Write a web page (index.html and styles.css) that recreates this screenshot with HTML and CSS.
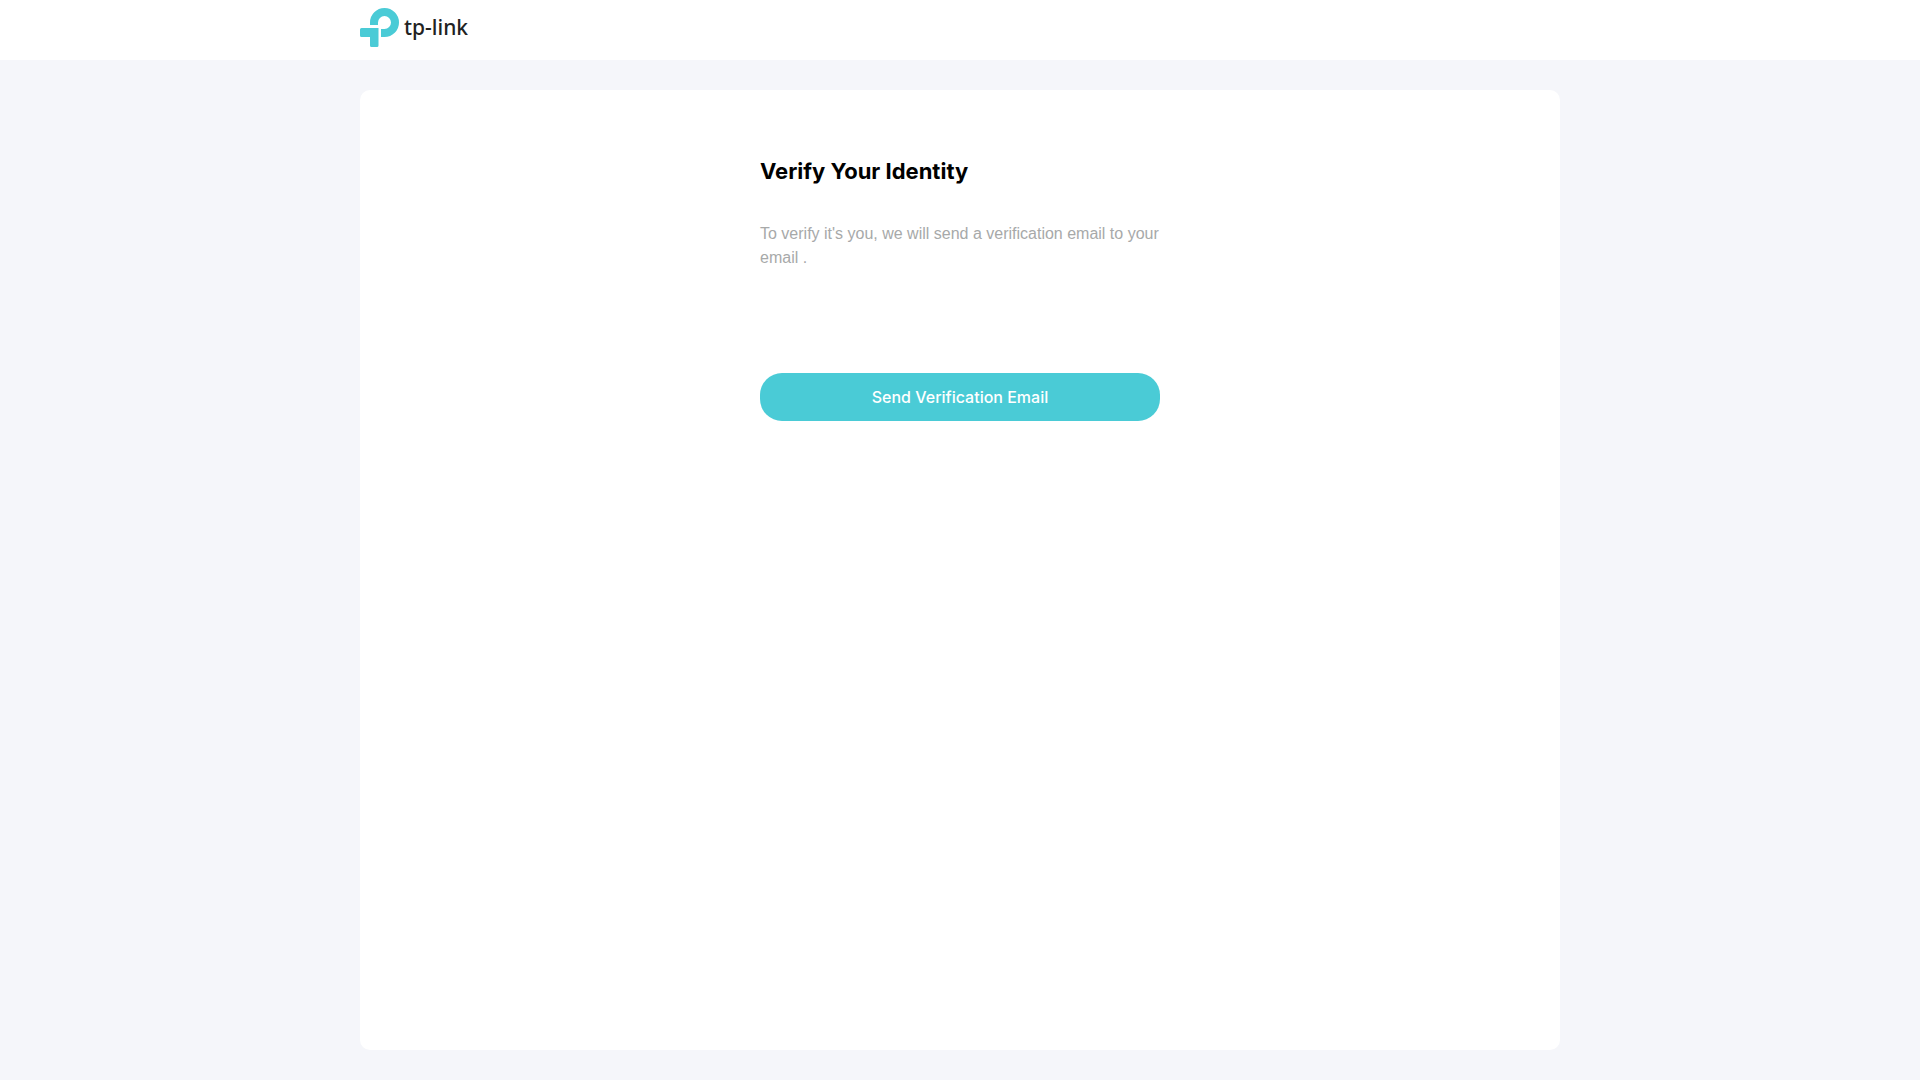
FILE: index.html
```html
<!DOCTYPE html>
<html lang="en">
<head>
  <meta charset="UTF-8">
  <meta name="viewport" content="width=device-width, initial-scale=1.0">
  <title>Verify Your Identity</title>
  <link rel="stylesheet" href="styles.css">
</head>
<body>
  <header class="header">
    <div class="container">
      <a class="logo" href="#">
        <svg class="logo-mark" viewBox="0 0 40 40" aria-hidden="true">
          <path d="M10 17V14.500A14.500 14.500 0 1 1 24.500 29H21V21H24.500A6.500 6.500 0 1 0 18 14.500V17Z"/>
          <path d="M1.500 20H18.500V37.500Q18.500 39 17 39H11.500Q10 39 10 37.500V29H1.500Q0 29 0 27.500V21.500Q0 20 1.500 20Z"/>
        </svg>
        <span class="logo-text">tp-link</span>
      </a>
    </div>
  </header>

  <main class="container card">
    <form class="verify">
      <h1>Verify Your Identity</h1>
      <p>To verify it's you, we will send a verification email to your email .</p>
      <button type="submit">Send Verification Email</button>
    </form>
  </main>
</body>
</html>
```
FILE: styles.css
```css
* {
  box-sizing: border-box;
}
body {
  display: flex;
  flex-direction: column;
  min-height: 100vh;
  margin: 0;
  font-family: Inter, Arial, sans-serif;
  background-color: #f5f6fa;
}
.container {
  width: 100%;
  max-width: 1200px;
  margin: 0 auto;
}
.header {
  height: 60px;
  background-color: #fff;
}
.logo {
  display: flex;
  gap: 4px;
  padding-top: 8px;
  color: #222;
  text-decoration: none;
}
.logo-mark {
  width: 40px;
  height: 40px;
  fill: #4acbd6;
}
.logo-text {
  font-family: "Noto Sans", sans-serif;
  font-size: 21px;
  font-weight: 500;
  line-height: 38px;
}
.card {
  flex: 1;
  margin: 30px auto;
  padding: 65px 16px;
  background-color: #fff;
  border-radius: 10px;
}
.verify {
  max-width: 400px;
  margin: 0 auto;
}
h1 {
  margin: 0 0 35px;
  font-size: 22px;
  font-weight: 700;
  line-height: 32px;
}
p {
  margin: 0 0 103px;
  font-family: "Liberation Sans", Arial, sans-serif;
  font-size: 16px;
  line-height: 24px;
  color: #a7a9a9;
}
button {
  width: 100%;
  height: 48px;
  font-family: inherit;
  font-size: 16px;
  font-weight: 500;
  color: #fff;
  background-color: #4acbd6;
  border: none;
  border-radius: 22px;
  cursor: pointer;
}
```
